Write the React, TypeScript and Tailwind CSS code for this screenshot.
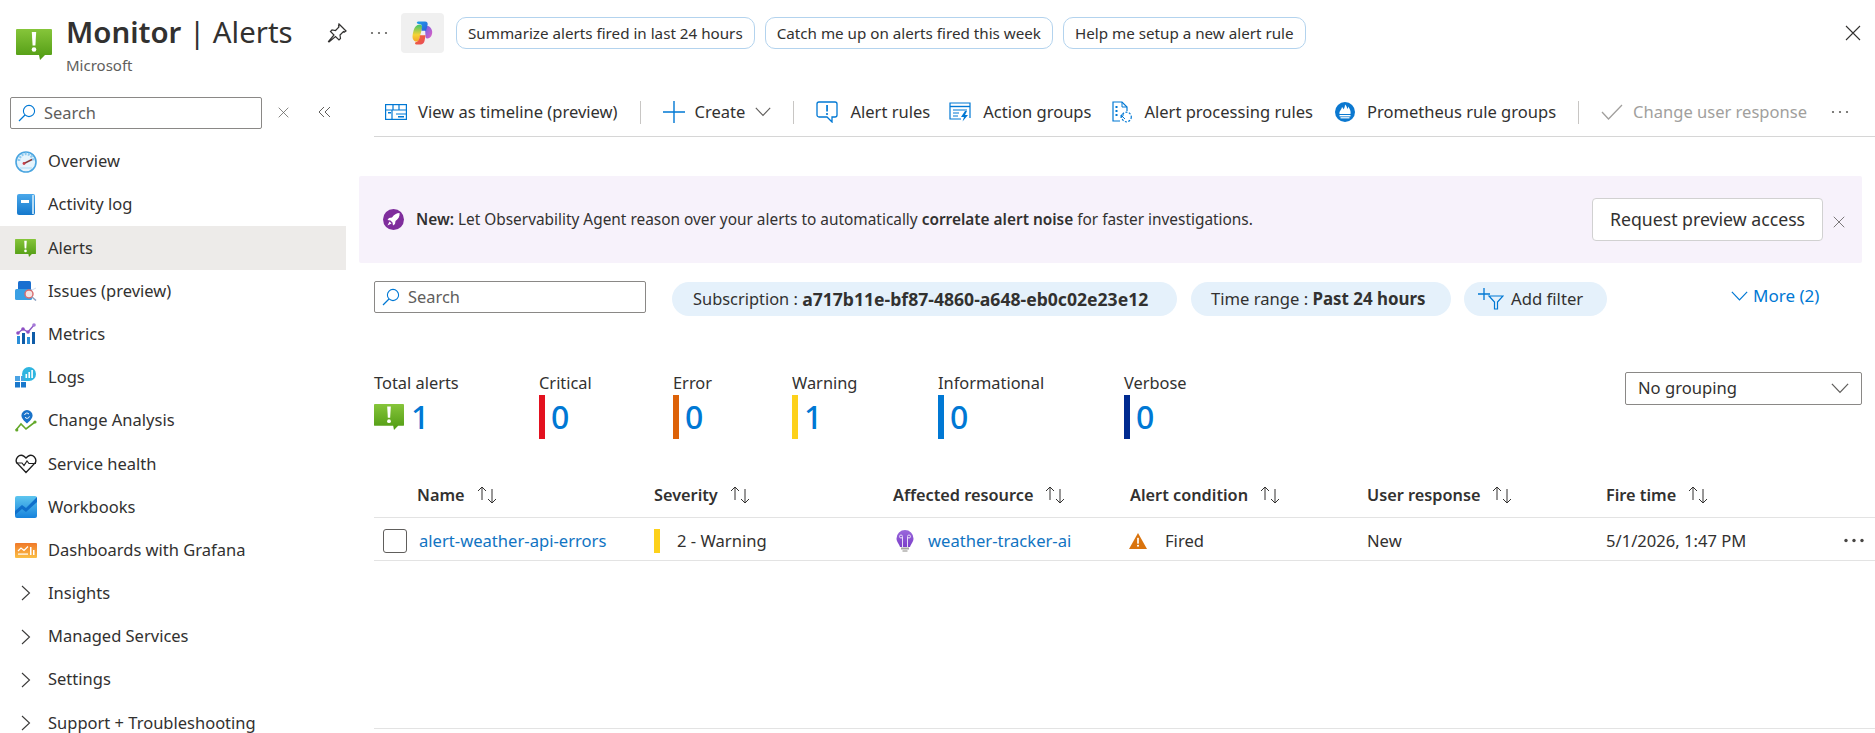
import React from "react";

const AlertIcon = ({ w, h, id }: { w: number; h: number; id: string }) => (
  <svg width={w} height={h} viewBox="0 0 36 31">
    <defs>
      <linearGradient id={id} x1="0" y1="0" x2="0" y2="1">
        <stop offset="0" stopColor="#86c53a" />
        <stop offset="1" stopColor="#4f9a12" />
      </linearGradient>
    </defs>
    <path d="M1 0h34a1 1 0 0 1 1 1v24a1 1 0 0 1-1 1H29l-5 5-1-5H1a1 1 0 0 1-1-1V1a1 1 0 0 1 1-1z" fill={`url(#${id})`} />
    <path d="M15.8 3h4.4l-.8 13.5h-2.8z" fill="#fff" />
    <circle cx="18" cy="20.5" r="2.3" fill="#fff" />
  </svg>
);

const Overview = () => (
  <svg width="22" height="22" viewBox="0 0 22 22">
    <circle cx="11" cy="11" r="10" fill="#e6f4fc" stroke="#4aa5e0" strokeWidth="1.6" />
    <path d="M4 10a7 7 0 0 1 14 0" fill="none" stroke="#8cc9ef" strokeWidth="2.5" strokeDasharray="2 1.2" />
    <path d="M9 12.5l8-4" stroke="#8a3a3a" strokeWidth="1.4" />
    <circle cx="9" cy="12.5" r="1.4" fill="#c8404a" />
    <path d="M5 17h12" stroke="#bfe3f7" strokeWidth="1.5" />
  </svg>
);
const ActivityLog = () => (
  <svg width="20" height="22" viewBox="0 0 20 22">
    <defs>
      <linearGradient id="book" x1="0" y1="0" x2="0" y2="1">
        <stop offset="0" stopColor="#4aa8ea" />
        <stop offset="1" stopColor="#1478cc" />
      </linearGradient>
    </defs>
    <rect x="1" y="0" width="18" height="21" rx="2" fill="url(#book)" />
    <rect x="16" y="1" width="2" height="19" fill="#b6dcf5" />
    <rect x="5" y="6" width="8" height="3" fill="#fff" />
  </svg>
);
const Issues = () => (
  <svg width="22" height="20" viewBox="0 0 22 20">
    <rect x="3" y="0" width="13" height="11" rx="1.5" fill="#1a6fd0" />
    <rect x="0" y="8" width="17" height="11" rx="1.5" fill="#3aa0e4" />
    <circle cx="14" cy="13" r="4" fill="#f3e4e4" stroke="#d9696a" strokeWidth="1.4" />
    <path d="M17 16l4 3.5" stroke="#8a9fc0" strokeWidth="1.5" />
    <path d="M17 9l4-2" stroke="#cfdcee" strokeWidth="1" />
  </svg>
);
const Metrics = () => (
  <svg width="20" height="22" viewBox="0 0 20 22">
    <rect x="1" y="13" width="3" height="8" fill="#2b8ed8" />
    <rect x="6" y="10" width="3" height="11" fill="#0f5ca8" />
    <rect x="11" y="14" width="3" height="7" fill="#2b8ed8" />
    <rect x="16" y="9" width="3" height="12" fill="#0f5ca8" />
    <path d="M2 10l5-4 5 3 6-7" fill="none" stroke="#8d5ac6" strokeWidth="1.4" />
    <circle cx="2" cy="10" r="1.8" fill="#8d4fc4" />
    <circle cx="7" cy="6" r="1.8" fill="#8d4fc4" />
    <circle cx="12" cy="9" r="1.8" fill="#8d4fc4" />
    <circle cx="18" cy="2" r="1.8" fill="#a67ad8" />
  </svg>
);
const Logs = () => (
  <svg width="21" height="21" viewBox="0 0 21 21">
    <rect x="0" y="9" width="5" height="5" fill="#4ba3e4" />
    <rect x="0" y="15" width="5" height="5.5" fill="#1a78cc" />
    <rect x="6" y="15" width="5" height="5.5" fill="#1a78cc" />
    <rect x="6" y="9" width="5" height="5" fill="#4ba3e4" />
    <circle cx="14" cy="7" r="7" fill="#2fb5e0" />
    <rect x="9" y="11" width="5" height="3" fill="#2fb5e0" />
    <rect x="10.5" y="7" width="1.6" height="4" fill="#fff" />
    <rect x="13.4" y="5" width="1.6" height="6" fill="#fff" />
    <rect x="16.3" y="3" width="1.6" height="8" fill="#fff" />
  </svg>
);
const ChangeAnalysis = () => (
  <svg width="22" height="22" viewBox="0 0 22 22">
    <path d="M1 20l5-6 5 5 9-7" fill="none" stroke="#63a82a" strokeWidth="1.6" />
    <circle cx="1.8" cy="20" r="1.6" fill="#63a82a" />
    <circle cx="20" cy="12" r="1.6" fill="#63a82a" />
    <path d="M12 0a5.6 5.6 0 0 1 5.6 5.6c0 3-3.4 6-5.6 8-2.2-2-5.6-5-5.6-8A5.6 5.6 0 0 1 12 0z" fill="#1a73c9" />
    <path d="M9.6 5a2.4 2.4 0 0 1 4.4-.8M14.4 6.4A2.4 2.4 0 0 1 10 7.2" fill="none" stroke="#fff" strokeWidth="1" />
  </svg>
);
const ServiceHealth = () => (
  <svg width="22" height="20" viewBox="0 0 22 20">
    <path d="M1.5 8.5C0 4 4 .5 7.5 1.5 9 2 10 3 11 4c1-1 2-2 3.5-2.500 3.500-1 7.500 2.500 6 7L11 18.500z" fill="none" stroke="#1f1f1f" strokeWidth="1.4" />
    <path d="M1 9h6l2 2.500 3-4.500 2 2.500h7" fill="none" stroke="#1f1f1f" strokeWidth="1.2" />
  </svg>
);
const Workbooks = () => (
  <svg width="22" height="22" viewBox="0 0 22 22">
    <defs>
      <linearGradient id="wb" x1="0" y1="0" x2="0" y2="1">
        <stop offset="0" stopColor="#5ec6ef" />
        <stop offset="1" stopColor="#1682dc" />
      </linearGradient>
    </defs>
    <rect width="22" height="22" rx="2" fill="url(#wb)" />
    <path d="M0 15l7-6 4 3 11-11v5L11 16l-4-3-7 6z" fill="#0f6fcb" />
  </svg>
);
const Grafana = () => (
  <svg width="22" height="15" viewBox="0 0 22 15">
    <defs>
      <linearGradient id="gf" x1="0" y1="0" x2="0" y2="1">
        <stop offset="0" stopColor="#f0792a" />
        <stop offset="1" stopColor="#fbbf45" />
      </linearGradient>
    </defs>
    <rect width="22" height="15" rx="1" fill="url(#gf)" />
    <path d="M3 8l3-3 3 2.500 4-4" fill="none" stroke="#fff" strokeWidth="1.2" />
    <rect x="3" y="10.500" width="10" height="1.200" fill="#fff" />
    <rect x="15" y="4" width="1.500" height="8" fill="#fff" />
    <rect x="18" y="7" width="1.500" height="5" fill="#fff" />
  </svg>
);
const Chevron = () => (
  <svg width="12" height="18" viewBox="0 0 12 18">
    <path d="M2 2l7.500 7L2 16" fill="none" stroke="#3b3a39" strokeWidth="1.100" />
  </svg>
);
const SearchIcon = () => (
  <svg width="18" height="18" viewBox="0 0 18 18">
    <circle cx="11" cy="7" r="5.600" fill="none" stroke="#0078d4" strokeWidth="1.100" />
    <path d="M7 11l-6 6" stroke="#0078d4" strokeWidth="1.200" />
  </svg>
);
const X = ({ s, c = "#605e5c" }: { s: number; c?: string }) => (
  <svg width={s} height={s} viewBox="0 0 16 16">
    <path d="M1 1l14 14M15 1L1 15" stroke={c} strokeWidth="1.100" />
  </svg>
);
const Dots = ({ c = "#605e5c" }: { c?: string }) => (
  <svg width="18" height="4" viewBox="0 0 18 4">
    <circle cx="2" cy="2" r="1.100" fill={c} />
    <circle cx="9" cy="2" r="1.100" fill={c} />
    <circle cx="16" cy="2" r="1.100" fill={c} />
  </svg>
);
const RowDots = () => (
  <svg width="22" height="5" viewBox="0 0 22 5">
    <circle cx="3" cy="2.500" r="1.700" fill="#484644" />
    <circle cx="11" cy="2.500" r="1.700" fill="#484644" />
    <circle cx="19" cy="2.500" r="1.700" fill="#484644" />
  </svg>
);
const Copilot = () => (
  <svg width="26" height="24" viewBox="3.5 0.5 21 23.500">
    <defs>
      <linearGradient id="cpa" x1="0" y1="0" x2="1" y2="1">
        <stop offset="0" stopColor="#1ea0ea" />
        <stop offset="1" stopColor="#2b5fd9" />
      </linearGradient>
      <linearGradient id="cpb" x1="0" y1="0" x2="0" y2="1">
        <stop offset="0" stopColor="#3dc46a" />
        <stop offset="0.600" stopColor="#f5d336" />
        <stop offset="1" stopColor="#f5a62a" />
      </linearGradient>
      <linearGradient id="cpc" x1="0" y1="0" x2="1" y2="1">
        <stop offset="0" stopColor="#6b63e8" />
        <stop offset="1" stopColor="#e65fc0" />
      </linearGradient>
      <linearGradient id="cpd" x1="0" y1="0" x2="1" y2="1">
        <stop offset="0" stopColor="#f2682a" />
        <stop offset="1" stopColor="#e84a5f" />
      </linearGradient>
    </defs>
    <path d="M4.500 11C5.500 7 7.500 4 11 4c2 0 2.500 2 2 4l-3 11c-.5 1.500-2 2-3.500 1.500C3 19 3.500 15 4.500 11z" fill="url(#cpb)" />
    <path d="M16 8c.5-3 3-3.500 5-1.500 3.500 3.500 2 8.500-.5 10.500-1.500 1.200-4 1-4-1z" fill="url(#cpc)" />
    <path d="M9 1h7c2 0 3 1.500 2.500 3.500L17 10h-4.500L13 6c.2-1.500-1-2.500-2-2.500C8 3.500 7 2 9 1z" fill="url(#cpa)" />
    <path d="M11 14.500h5.500L15.500 20c-.5 2-2 3.500-4 3.500H8c-2 0-2.500-2-.5-2.500C9.500 20.500 10.500 18.500 11 14.500z" fill="url(#cpd)" />
  </svg>
);
const Pin = () => (
  <svg width="20" height="20" viewBox="0 0 20 20">
    <path d="M12 1l7 7-1.500 1-1-.5-3.500 3.500.5 3.500-1.500 1.500-3.500-3.500L2 19l-.5-.5 5.500-6.500-3.500-3.500L5 7l3.500.5L12 4l-.5-1z" fill="none" stroke="#323130" strokeWidth="1.200" />
  </svg>
);
const Sort = () => (
  <svg width="22" height="18" viewBox="0 0 22 18">
    <path d="M6 14V1M2 5l4-4 4 4" fill="none" stroke="#323130" strokeWidth="1" />
    <path d="M16 3v14M12 13l4 4 4-4" fill="none" stroke="#323130" strokeWidth="1" />
  </svg>
);
const Timeline = () => (
  <svg width="22" height="16" viewBox="0 0 22 16">
    <rect x=".6" y=".6" width="20.800" height="14.800" fill="none" stroke="#0078d4" strokeWidth="1.200" />
    <path d="M1 6h20M8 1v5M14 1v5M7 6v9M11 10h10" stroke="#0078d4" strokeWidth="1.200" />
    <rect x="3" y="8" width="3" height="1.500" fill="#0078d4" />
    <rect x="13" y="12" width="6" height="1.500" fill="#0078d4" />
  </svg>
);
const Plus = () => (
  <svg width="22" height="22" viewBox="0 0 22 22">
    <path d="M11 0v22M0 11h22" stroke="#0078d4" strokeWidth="1.400" />
  </svg>
);
const AlertRule = () => (
  <svg width="22" height="22" viewBox="0 0 22 22">
    <path d="M3 1h16a2 2 0 0 1 2 2v11a2 2 0 0 1-2 2h-3v5l-5-5H3a2 2 0 0 1-2-2V3a2 2 0 0 1 2-2z" fill="none" stroke="#0078d4" strokeWidth="1.300" />
    <rect x="10.200" y="4" width="1.700" height="6.500" fill="#0078d4" />
    <circle cx="11" cy="13" r="1.100" fill="#0078d4" />
  </svg>
);
const ActionGroup = () => (
  <svg width="22" height="20" viewBox="0 0 22 20">
    <path d="M12 17H1V1h20v15" fill="none" stroke="#0078d4" strokeWidth="1.200" />
    <path d="M1 4.500h20" stroke="#0078d4" strokeWidth="1.400" />
    <path d="M4 8h14M4 11h6M4 14h5" stroke="#0078d4" strokeWidth="1.100" />
    <path d="M16 9l-4 6h3l-1.500 4.500L19 13h-3l2-4z" fill="#0078d4" />
  </svg>
);
const Processing = () => (
  <svg width="20" height="22" viewBox="0 0 20 22">
    <path d="M8 20H1V1h9l5 5v4" fill="none" stroke="#0078d4" strokeWidth="1.200" />
    <path d="M10 1v5h5" fill="none" stroke="#0078d4" strokeWidth="1" />
    <rect x="3.500" y="5" width="2" height="2" fill="#0078d4" />
    <rect x="3.500" y="9" width="2" height="2" fill="#0078d4" />
    <rect x="3.500" y="13" width="2" height="2" fill="#0078d4" />
    <path d="M9 14l4 4M9 14v3M9 14h3" fill="none" stroke="#0078d4" strokeWidth="1" />
    <circle cx="14.500" cy="16" r="4.800" fill="none" stroke="#0078d4" strokeWidth="1.200" strokeDasharray="2 1.500" />
  </svg>
);
const Prometheus = () => (
  <svg width="20" height="20" viewBox="0 0 20 20">
    <circle cx="10" cy="10" r="10" fill="#0b78d0" />
    <path d="M4.500 12c-.5-3 2-4 2.500-7 1 1 1.500 2 1.500 2.500C9.500 6 10 4 10 2.500c2 1.500 2 3.500 2.200 4.500.5-.5 1-1.500 1-2.500 1.500 2.500 3 4.500 2.300 7.500z" fill="#fff" />
    <rect x="4.500" y="13" width="11" height="1.400" fill="#fff" />
    <rect x="5.500" y="15.200" width="9" height="1.200" fill="#fff" />
  </svg>
);
const Check = () => (
  <svg width="22" height="16" viewBox="0 0 22 16">
    <path d="M1 8l6.500 7L21 1" fill="none" stroke="#a19f9d" strokeWidth="1.300" />
  </svg>
);
const ChevDown = ({ w, c = "#605e5c" }: { w: number; c?: string }) => (
  <svg width={w} height={w * 0.6} viewBox="0 0 20 12">
    <path d="M1 1l9 9.500L19 1" fill="none" stroke={c} strokeWidth="1.400" />
  </svg>
);
const Rocket = () => (
  <svg width="21" height="21" viewBox="0 0 21 21">
    <circle cx="10.500" cy="10.500" r="10.500" fill="#7f2d9c" />
    <path d="M16.500 4c-3 0-5.500 1.500-7.500 4.500L6 9l-1.500 2 3 .5 2 2 .5 3 2-1.500.5-3c3-2 4.500-5 4-8z" fill="#fff" />
    <path d="M6.500 12.500L4.500 16.500l4-2z" fill="#fff" />
  </svg>
);
const AddFilter = () => (
  <svg width="26" height="22" viewBox="0 0 26 22">
    <path d="M6 0v12M0 6h12" stroke="#0078d4" strokeWidth="1.300" />
    <path d="M11 8h14l-5.500 6v7h-3v-7z" fill="none" stroke="#0078d4" strokeWidth="1.200" />
  </svg>
);
const Bulb = () => (
  <svg width="18" height="22" viewBox="0 0 18 22">
    <defs>
      <linearGradient id="bulb" x1="0" y1="0" x2="0" y2="1">
        <stop offset="0" stopColor="#9a68dc" />
        <stop offset="1" stopColor="#7c3fc9" />
      </linearGradient>
    </defs>
    <path d="M9 0a8.500 8.500 0 0 1 8.500 8.500c0 3.500-2.500 5-3.500 8.500H4C3 13.500.5 12 .5 8.500A8.500 8.500 0 0 1 9 0z" fill="url(#bulb)" />
    <rect x="5" y="17.500" width="8" height="2" fill="#a8a6a4" />
    <rect x="6.500" y="20" width="5" height="2" fill="#c4c3c1" />
    <path d="M6.500 17V7M11.500 17V7" fill="none" stroke="#e8dcf8" strokeWidth="1" />
    <circle cx="5" cy="6.500" r="1.500" fill="none" stroke="#e8dcf8" strokeWidth="1" />
    <circle cx="13" cy="6.500" r="1.500" fill="none" stroke="#e8dcf8" strokeWidth="1" />
  </svg>
);
const Tri = () => (
  <svg width="18" height="16" viewBox="0 0 17 15">
    <path d="M8.500 0l8.500 15H0z" fill="#d9730d" />
    <rect x="7.700" y="4.500" width="1.600" height="5.500" fill="#fff" />
    <circle cx="8.500" cy="12" r="1" fill="#fff" />
  </svg>
);

const nav: { label: string; icon: React.ReactNode; active?: boolean }[] = [
  { label: "Overview", icon: <Overview /> },
  { label: "Activity log", icon: <ActivityLog /> },
  { label: "Alerts", icon: <AlertIcon w={21} h={18} id="navalert" />, active: true },
  { label: "Issues (preview)", icon: <Issues /> },
  { label: "Metrics", icon: <Metrics /> },
  { label: "Logs", icon: <Logs /> },
  { label: "Change Analysis", icon: <ChangeAnalysis /> },
  { label: "Service health", icon: <ServiceHealth /> },
  { label: "Workbooks", icon: <Workbooks /> },
  { label: "Dashboards with Grafana", icon: <Grafana /> },
  { label: "Insights", icon: <Chevron /> },
  { label: "Managed Services", icon: <Chevron /> },
  { label: "Settings", icon: <Chevron /> },
  { label: "Support + Troubleshooting", icon: <Chevron /> },
];

const chips = [
  "Summarize alerts fired in last 24 hours",
  "Catch me up on alerts fired this week",
  "Help me setup a new alert rule",
];

const Sep = () => <div className="mx-[22px] h-[23px] w-px bg-[#c8c6c4]" />;

const Stat = ({ label, value, bar, w }: { label: string; value: string; bar: string; w: string }) => (
  <div className={`flex flex-col ${w}`}>
    <div className="h-[22px] text-[16.4px] leading-[22px] text-[#323130]">{label}</div>
    <div className="mt-[1px] flex h-[44px] items-center gap-[6px]">
      <div className={`h-[44px] w-[6px] ${bar}`} />
      <span className="text-[32px] font-medium leading-[44px] text-[#0078d4]">{value}</span>
    </div>
  </div>
);

const Head = ({ label }: { label: string }) => (
  <div className="flex items-center gap-[11px] text-[16.3px] font-semibold text-[#323130]">
    <span>{label}</span>
    <Sort />
  </div>
);

export default function App() {
  return (
    <div className="flex h-[733px] w-[1875px] flex-col overflow-hidden bg-white font-['Noto_Sans',sans-serif] text-[#323130]">
      <header className="flex h-[88px] shrink-0">
        <div className="ml-[16px] mt-[29px]">
          <AlertIcon w={36} h={31} id="headalert" />
        </div>
        <div className="ml-[14px] mt-[11px] flex w-[259px] flex-col">
          <div className="h-[44px] whitespace-nowrap text-[29.4px] leading-[42px] text-[#323130]">
            <span className="font-semibold">Monitor</span> | Alerts
          </div>
          <div className="text-[15px] leading-[20px] text-[#605e5c]">Microsoft</div>
        </div>
        <div className="ml-[2px] mt-[23px]">
          <Pin />
        </div>
        <div className="ml-[23px] mt-[31px]">
          <Dots />
        </div>
        <div className="ml-[13px] mt-[13px] flex h-[40px] w-[43px] items-center justify-center rounded-[4px] bg-[#f0f0f0]">
          <Copilot />
        </div>
        <div className="ml-[12px] mt-[17px] flex h-[32px] gap-[10px]">
          {chips.map((c) => (
            <div key={c} className="flex items-center whitespace-nowrap rounded-[10px] border border-[#b3d3ee] px-[11px] text-[15.2px] text-[#323130]">
              {c}
            </div>
          ))}
        </div>
        <div className="ml-auto mr-[14px] mt-[25px]">
          <X s={16} c="#323130" />
        </div>
      </header>
      <div className="flex min-h-0 flex-1">
        <aside className="w-[346px] shrink-0">
          <div className="flex h-[52px] items-start pl-[10px] pt-[9px]">
            <div className="flex h-[32px] w-[252px] items-center gap-[8px] rounded-[2px] border border-[#8a8886] pl-[7px] text-[16.4px] text-[#605e5c]">
              <SearchIcon />
              <span>Search</span>
            </div>
            <div className="ml-[16px] mt-[10px]">
              <X s={11} />
            </div>
            <div className="ml-[29px] mt-[9px] text-[#605e5c]">
              <svg width="13" height="12" viewBox="0 0 13 12">
                <path d="M6 1L1 6l5 5M12 1L7 6l5 5" fill="none" stroke="#605e5c" strokeWidth="1" />
              </svg>
            </div>
          </div>
          {nav.map((n) => (
            <div key={n.label} className={`flex h-[43.2px] items-center ${n.active ? "bg-[#edebe9]" : ""}`}>
              <div className="flex w-[48px] shrink-0 items-center justify-center pl-[3px]">{n.icon}</div>
              <span className="whitespace-nowrap text-[16.5px] text-[#323130]">{n.label}</span>
            </div>
          ))}
        </aside>
        <main className="min-w-0 flex-1">
          <div className="ml-[28px] flex h-[49px] items-center border-b border-[#d6d6d6] pl-[11px] text-[16.55px] text-[#323130]">
            <Timeline />
            <span className="ml-[11px] whitespace-nowrap">View as timeline (preview)</span>
            <Sep />
            <Plus />
            <span className="ml-[10px]">Create</span>
            <span className="ml-[10px]"><ChevDown w={16} /></span>
            <Sep />
            <AlertRule />
            <span className="ml-[12px] whitespace-nowrap">Alert rules</span>
            <span className="ml-[19px]"><ActionGroup /></span>
            <span className="ml-[12px] whitespace-nowrap">Action groups</span>
            <span className="ml-[21px]"><Processing /></span>
            <span className="ml-[12px] whitespace-nowrap">Alert processing rules</span>
            <span className="ml-[22px]"><Prometheus /></span>
            <span className="ml-[12px] whitespace-nowrap">Prometheus rule groups</span>
            <Sep />
            <Check />
            <span className="ml-[10px] whitespace-nowrap text-[#a19f9d]">Change user response</span>
            <span className="ml-[24px]"><Dots /></span>
          </div>
          <div className="ml-[13px] mt-[39px] flex h-[87px] w-[1503px] items-center rounded-[2px] bg-[#f7f2fb] pl-[24px]">
            <Rocket />
            <div className="ml-[12px] whitespace-nowrap text-[15.4px] text-[#323130]">
              <span className="font-semibold">New:</span> Let Observability Agent reason over your alerts to automatically{" "}
              <span className="font-semibold">correlate alert noise</span> for faster investigations.
            </div>
            <div className="ml-auto flex h-[43px] w-[231px] items-center justify-center rounded-[4px] border border-[#d1d1d1] bg-white text-[17.7px]">
              Request preview access
            </div>
            <div className="ml-[10px] mr-[17px] mt-[4px]">
              <X s={12} />
            </div>
          </div>
          <div className="ml-[28px] mt-[18px] flex h-[34px] items-start">
            <div className="flex h-[32px] w-[272px] items-center gap-[8px] rounded-[2px] border border-[#8a8886] pl-[7px] text-[16.4px] text-[#605e5c]">
              <SearchIcon />
              <span>Search</span>
            </div>
            <div className="ml-[26px] mt-[1px] flex h-[34px] w-[505px] items-center whitespace-nowrap rounded-full bg-[#e5f1fb] pl-[21px] text-[16.4px]">
              Subscription :&nbsp;<span className="text-[17.6px] font-bold">a717b11e-bf87-4860-a648-eb0c02e23e12</span>
            </div>
            <div className="ml-[14px] mt-[1px] flex h-[34px] w-[260px] items-center whitespace-nowrap rounded-full bg-[#e5f1fb] pl-[20px] text-[16.6px]">
              Time range :&nbsp;<span className="text-[16.9px] font-bold">Past 24 hours</span>
            </div>
            <div className="ml-[13px] mt-[1px] flex h-[34px] w-[143px] items-center whitespace-nowrap rounded-full bg-[#e5f1fb] pl-[14px] text-[16.7px]">
              <AddFilter />
              <span className="ml-[7px]">Add filter</span>
            </div>
            <div className="ml-[124px] mt-[2px] flex items-center gap-[5px] whitespace-nowrap text-[17px] text-[#0078d4]">
              <ChevDown w={17} c="#0078d4" />
              <span>More (2)</span>
            </div>
          </div>
          <div className="ml-[28px] mt-[57px] flex h-[68px] items-start pr-[13px]">
            <div className="flex w-[165px] flex-col">
              <div className="h-[22px] text-[16.4px] leading-[22px]">Total alerts</div>
              <div className="mt-[1px] flex h-[44px] items-center gap-[7px]">
                <AlertIcon w={30} h={26} id="sumalert" />
                <span className="text-[32px] font-medium leading-[44px] text-[#0078d4]">1</span>
              </div>
            </div>
            <Stat label="Critical" value="0" bar="bg-[#e3111f]" w="w-[134px]" />
            <Stat label="Error" value="0" bar="bg-[#dd6208]" w="w-[119px]" />
            <Stat label="Warning" value="1" bar="bg-[#fdd11a]" w="w-[146px]" />
            <Stat label="Informational" value="0" bar="bg-[#0078d4]" w="w-[186px]" />
            <Stat label="Verbose" value="0" bar="bg-[#002a90]" w="w-[100px]" />
            <div className="ml-auto flex h-[33px] w-[237px] items-center justify-between rounded-[2px] border border-[#8a8886] pl-[12px] pr-[12px] text-[16.6px]">
              <span>No grouping</span>
              <ChevDown w={18} />
            </div>
          </div>
          <div className="ml-[28px] mt-[34px] grid h-[44px] grid-cols-[237px_239px_237px_237px_239px_1fr] items-center border-b border-[#e3e3e3] pb-[1px] pl-[43px]">
            <Head label="Name" />
            <Head label="Severity" />
            <Head label="Affected resource" />
            <Head label="Alert condition" />
            <Head label="User response" />
            <Head label="Fire time" />
          </div>
          <div className="ml-[28px] flex h-[43px] items-center border-b border-[#e3e3e3] pt-[3px] text-[16.6px]">
            <div className="ml-[9px] h-[24px] w-[24px] rounded-[3px] border border-[#605e5c]" />
            <a className="ml-[12px] mt-[2px] w-[235px] whitespace-nowrap text-[#1174c2]">alert-weather-api-errors</a>
            <div className="h-[24px] w-[6px] bg-[#fdd11a]" />
            <span className="ml-[17px] mt-[2px] w-[219px] whitespace-nowrap">2 - Warning</span>
            <Bulb />
            <a className="ml-[14px] mt-[2px] w-[201px] whitespace-nowrap text-[#1174c2]">weather-tracker-ai</a>
            <Tri />
            <span className="ml-[18px] mt-[2px] w-[202px]">Fired</span>
            <span className="mt-[2px] w-[239px]">New</span>
            <span className="mt-[2px] whitespace-nowrap">5/1/2026, 1:47 PM</span>
            <span className="ml-auto mr-[10px]"><RowDots /></span>
          </div>
          <div className="ml-[28px] mt-[167px] h-px bg-[#e3e3e3]" />
        </main>
      </div>
    </div>
  );
}
